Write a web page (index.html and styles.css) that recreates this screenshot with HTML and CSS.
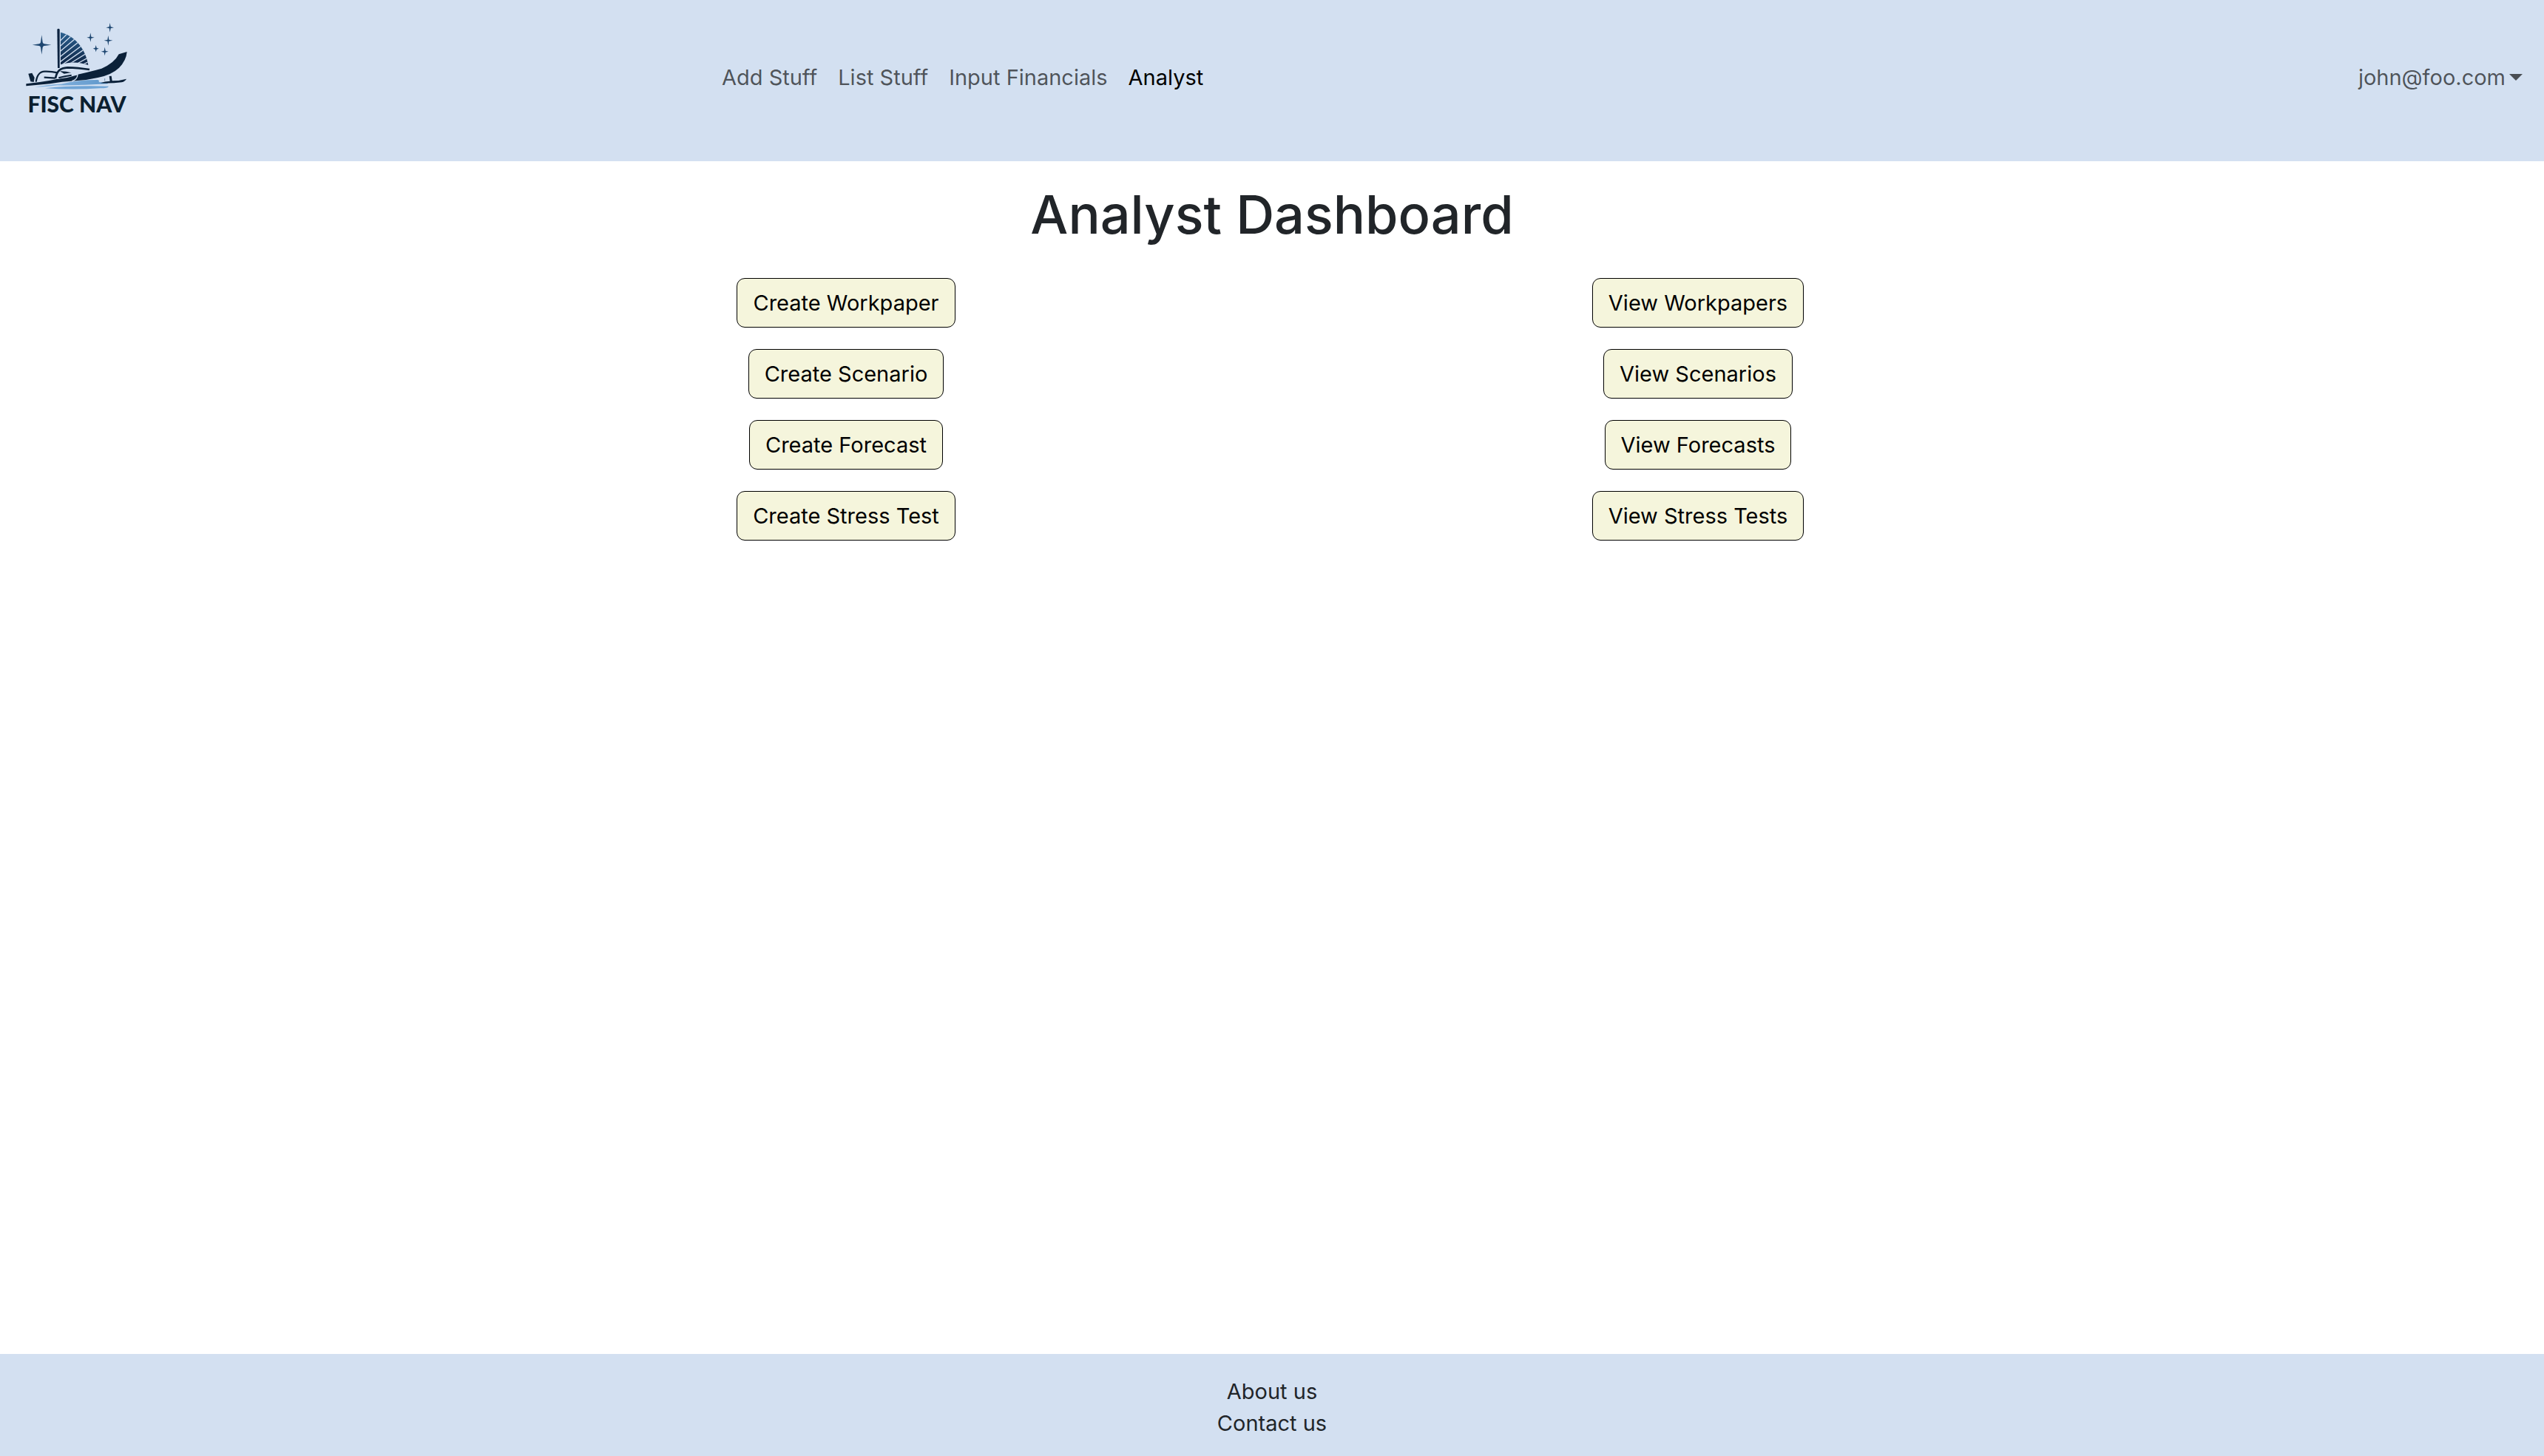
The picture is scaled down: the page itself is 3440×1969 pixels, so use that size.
FILE: index.html
```html
<!DOCTYPE html>
<html lang="en">
<head>
<meta charset="utf-8">
<meta name="viewport" content="width=device-width, initial-scale=1">
<title>Analyst Dashboard</title>
<link rel="stylesheet" href="styles.css">
</head>
<body>
<header class="navbar">
  <div class="brand-area">
    <a class="brand" href="#">
      <svg class="brand-art" viewBox="87 42 450 324" aria-hidden="true">
        <defs>
          <linearGradient id="sail" x1="0" y1="0" x2="0" y2="1"><stop offset="0" stop-color="#2c6291"/><stop offset="1" stop-color="#0e2444"/></linearGradient>
          <linearGradient id="water" x1="0" y1="0" x2="1" y2="0"><stop offset="0" stop-color="#8db9e2"/><stop offset="1" stop-color="#5f97cb"/></linearGradient>
          <clipPath id="sail-shape"><path d="M246 131C300 144 347 194 358 264C322 251 283 250 246 262Z"/></clipPath>
        </defs>
        <g fill="#1d4670">
          <path d="M169 142L173 172Q174 177 179 178L208 182L179 186Q174 187 173 192L169 221L165 192Q164 187 159 186L131 182L159 178Q164 177 165 172Z"/>
          <path d="M446 93L449 109L462 112L449 115L446 131L443 115L430 112L443 109Z"/>
          <path d="M367 133L370 149L383 152L370 155L367 170L364 155L352 152L364 149Z"/>
          <path d="M439 144L442 161L457 164L442 167L439 185L436 167L422 164L436 161Z"/>
          <path d="M389 183L392 194L401 197L392 200L389 211L386 200L377 197L386 194Z"/>
          <path d="M425 191L428 206L440 209L428 212L425 226L422 212L410 209L422 206Z"/>
        </g>
        <path d="M232 119Q237 114 242 119V276H234Z" fill="#0c2340"/>
        <path d="M246 131C300 144 347 194 358 264C322 251 283 250 246 262Z" fill="url(#sail)"/>
        <path d="M240 170L280 130M240 191L300 136M240 212L318 146M240 233L334 158M240 254L346 174M250 264L356 190M274 264L360 211M302 264L366 229M330 264L370 246" fill="none" stroke="#d3e0f1" stroke-width="4" clip-path="url(#sail-shape)"/>
        <path d="M140 354Q185 343 248 341Q310 324 397 324Q408 330 398 333L437 335V340Q330 347 232 346Q190 352 140 354Z" fill="url(#water)"/>
        <path d="M183 358Q280 346 441 350Q438 358 407 358Q300 365 183 358Z" fill="#6fa4d5"/>
        <path d="M115 299L130 296L140 315L137 333L124 331Z" fill="#0b2139"/>
        <path d="M146 332C150 307 158 291 181 290Q207 289 234 295M179 314L224 317" fill="none" stroke="#0b2139" stroke-width="7"/>
        <path d="M106 340Q202 330 283 309Q359 293 412 278Q464 256 482 220L515 210Q512 246 483 275Q454 303 397 315Q350 326 305 328Q250 331 202 340L106 349Z" fill="#0b2139"/>
        <path d="M226 316C234 286 246 278 274 277Q310 277 345 286L300 304L238 317Z" fill="#d3e0f1"/>
        <path d="M243 289Q264 288 289 295L260 299Z" fill="#0b2139"/>
        <path d="M225 318C231 287 244 276 274 274Q314 275 363 282" fill="none" stroke="#0b2139" stroke-width="8"/>
        <path d="M232 319Q275 315 315 302Q314 322 292 329" fill="none" stroke="#d3e0f1" stroke-width="4"/>
        <path d="M238 316Q262 309 290 305" fill="none" stroke="#0b2139" stroke-width="6"/>
        <path d="M407 337Q425 329 446 329L443 309L452 308L455 328Q485 328 513 320Q508 330 493 334Q450 339 407 337Z" fill="#0b2139"/>
        <path d="M425 318V328" stroke="#6f92b4" stroke-width="3"/>
      </svg>
      <span class="brand-name">FISC NAV</span>
    </a>
  </div>
  <nav class="nav-links">
    <a class="nav-link" href="#">Add Stuff</a>
    <a class="nav-link" href="#">List Stuff</a>
    <a class="nav-link" href="#">Input Financials</a>
    <a class="nav-link active" href="#" aria-current="page">Analyst</a>
  </nav>
  <button class="account" type="button" aria-haspopup="true">john@foo.com<span class="caret"></span></button>
</header>
<main class="content">
  <h1 class="title">Analyst Dashboard</h1>
  <div class="actions">
    <div class="action-column">
      <button class="btn" type="button">Create Workpaper</button>
      <button class="btn" type="button">Create Scenario</button>
      <button class="btn" type="button">Create Forecast</button>
      <button class="btn" type="button">Create Stress Test</button>
    </div>
    <div class="action-column">
      <button class="btn" type="button">View Workpapers</button>
      <button class="btn" type="button">View Scenarios</button>
      <button class="btn" type="button">View Forecasts</button>
      <button class="btn" type="button">View Stress Tests</button>
    </div>
  </div>
</main>
<footer class="footer">
  <a class="footer-link" href="#">About us</a>
  <a class="footer-link" href="#">Contact us</a>
</footer>
</body>
</html>
```
FILE: styles.css
```css
* {
  box-sizing: border-box;
}

body {
  margin: 0;
  min-height: 100vh;
  display: flex;
  flex-direction: column;
  background: #fff;
  color: #212529;
  font-family: Inter, "Liberation Sans", sans-serif;
  font-size: 29px;
  line-height: 43px;
}

a {
  color: inherit;
  text-decoration: none;
}

button {
  font: inherit;
  cursor: pointer;
}

.navbar {
  display: flex;
  align-items: center;
  padding: 14px 29px 23px;
  background: #d3e0f1;
}

.brand-area {
  flex: 0 0 28%;
}

.brand {
  display: inline-flex;
  flex-direction: column;
  align-items: center;
  gap: 4px;
  padding-bottom: 41px;
  vertical-align: top;
}

.brand-art {
  display: block;
  width: 150px;
  height: 108px;
}

.brand-name {
  color: #0b1f30;
  font-family: Lato, "Liberation Sans", sans-serif;
  font-size: 30px;
  font-weight: 900;
  line-height: 28px;
}

.nav-links {
  display: flex;
  gap: 28px;
}

.nav-link,
.account {
  color: rgba(0, 0, 0, 0.65);
}

.nav-link.active {
  color: #000;
}

.account {
  display: flex;
  align-items: center;
  gap: 5px;
  margin-left: auto;
  padding: 0;
  border: 0;
  background: none;
}

.caret {
  border: 9px solid transparent;
  border-top-color: currentColor;
  border-bottom: 0;
}

.content {
  flex: 1;
  padding: 29px;
}

.title {
  margin: 0 0 43px;
  font-size: 72px;
  font-weight: 500;
  line-height: 86px;
  text-align: center;
}

.actions {
  display: grid;
  grid-template-columns: 1fr 1fr;
  max-width: 2304px;
  margin: 0 auto;
}

.action-column {
  display: flex;
  flex-direction: column;
  align-items: center;
  gap: 29px;
}

.btn {
  padding: 11px 21px;
  border: 1px solid #000;
  border-radius: 11px;
  background: #f5f5dc;
  color: #000;
}

.footer {
  display: flex;
  flex-direction: column;
  align-items: center;
  padding: 29px 29px 23px;
  background: #d3e0f1;
}
```
